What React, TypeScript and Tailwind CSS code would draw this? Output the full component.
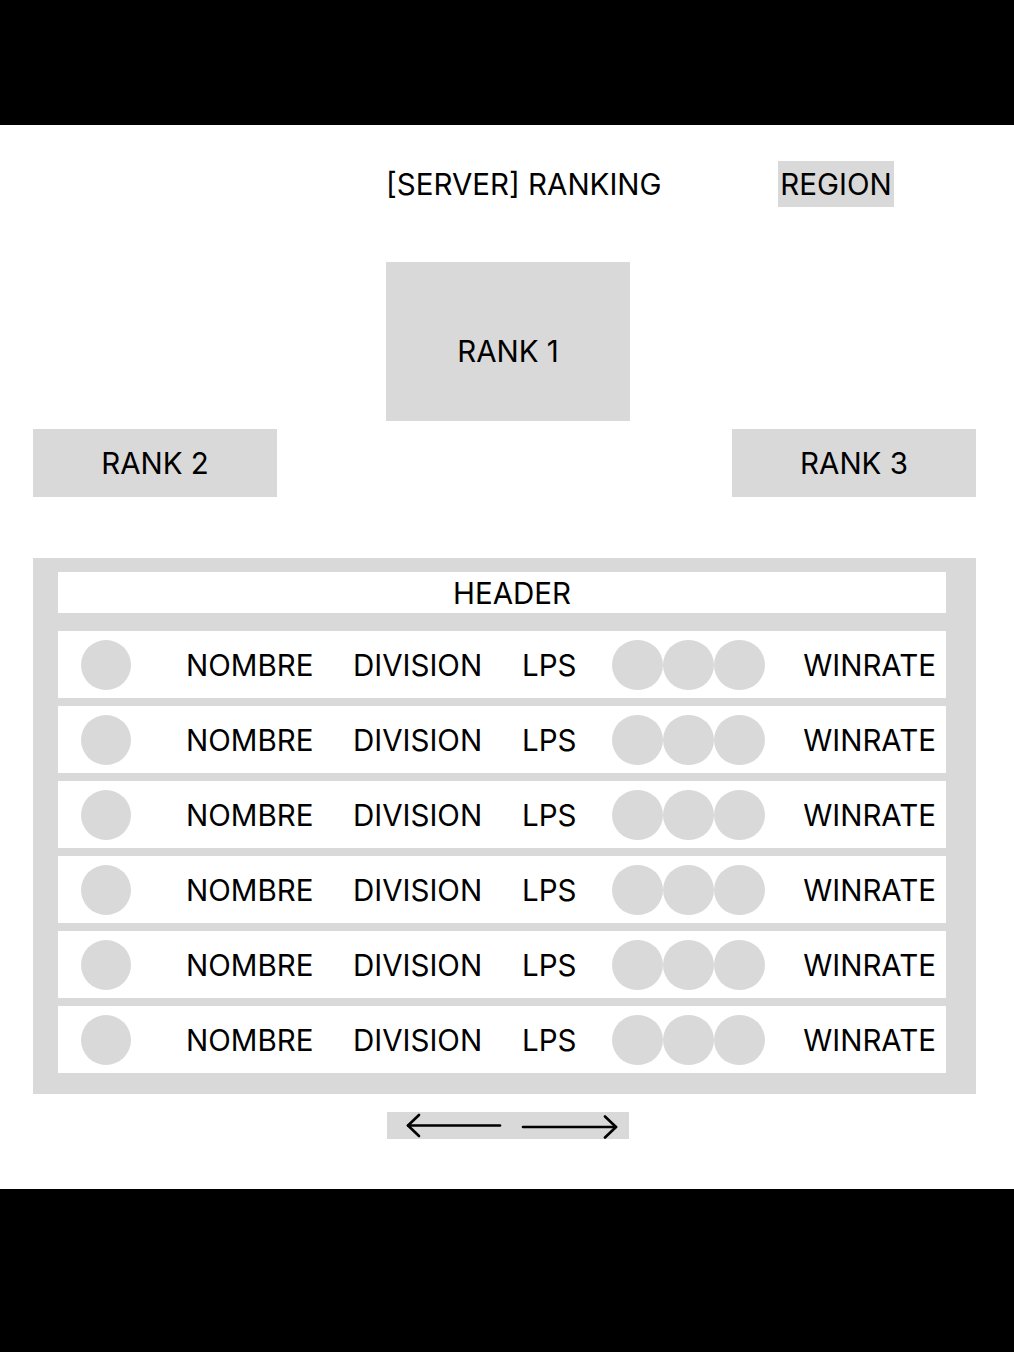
const filas = [1, 2, 3, 4, 5, 6]

function Fila() {
  return (
    <div className="flex h-[67px] items-center bg-white">
      <div className="ml-[23px] h-[50px] w-[50px] shrink-0 rounded-full bg-[#d9d9d9]" />
      <span className="ml-[55px] w-[167px] shrink-0 pt-[2px]">NOMBRE</span>
      <span className="w-[169px] shrink-0 pt-[2px]">DIVISION</span>
      <span className="w-[90px] shrink-0 pt-[2px]">LPS</span>
      <div className="flex shrink-0">
        <div className="h-[50px] w-[51px] rounded-full bg-[#d9d9d9]" />
        <div className="h-[50px] w-[51px] rounded-full bg-[#d9d9d9]" />
        <div className="h-[50px] w-[51px] rounded-full bg-[#d9d9d9]" />
      </div>
      <span className="ml-auto pr-[10px] pt-[2px]">WINRATE</span>
    </div>
  )
}

export default function App() {
  return (
    <div className="min-h-[1352px] bg-black text-[29.5px] leading-none text-black" style={{ fontFamily: 'Inter, "Liberation Sans", sans-serif' }}>
      <div className="h-[125px]" />
      <main className="flex h-[1064px] flex-col bg-white">
        <div className="mt-[36px] flex h-[46px] items-center pl-[386px] pr-[120px]">
          <h1 className="pt-[2px] font-normal">[SERVER] RANKING</h1>
          <button className="ml-auto flex h-[46px] w-[116px] items-center justify-center bg-[#d9d9d9] pt-[2px]">REGION</button>
        </div>

        <div className="ml-[386px] mt-[55px] flex h-[159px] w-[244px] items-center justify-center bg-[#d9d9d9] pt-[20px]">
          RANK 1
        </div>

        <div className="mt-[8px] flex justify-between pl-[33px] pr-[38px]">
          <div className="flex h-[68px] w-[244px] items-center justify-center bg-[#d9d9d9] pt-[2px]">RANK 2</div>
          <div className="flex h-[68px] w-[244px] items-center justify-center bg-[#d9d9d9] pt-[2px]">RANK 3</div>
        </div>

        <div className="ml-[33px] mt-[61px] flex h-[536px] w-[943px] flex-col bg-[#d9d9d9] pb-[21px] pl-[25px] pr-[30px] pt-[14px]">
          <div className="flex h-[41px] items-center justify-center bg-white pl-[20px] pt-[3px]">HEADER</div>
          <div className="mt-[18px] flex flex-col gap-[8px]">
            {filas.map((f) => (
              <Fila key={f} />
            ))}
          </div>
        </div>

        <div className="ml-[387px] mt-[18px] flex h-[27px] w-[242px] items-center bg-[#d9d9d9]">
          <svg width="242" height="27" viewBox="0 0 242 27" fill="none" stroke="black" strokeWidth="2.6" strokeLinecap="round" strokeLinejoin="round">
            <path d="M21 13.5 H113" />
            <path d="M32 3 L21 13.5 L32 24" />
            <path d="M136 15 H229" />
            <path d="M218 4.5 L229 15 L218 25.5" />
          </svg>
        </div>
      </main>
    </div>
  )
}
